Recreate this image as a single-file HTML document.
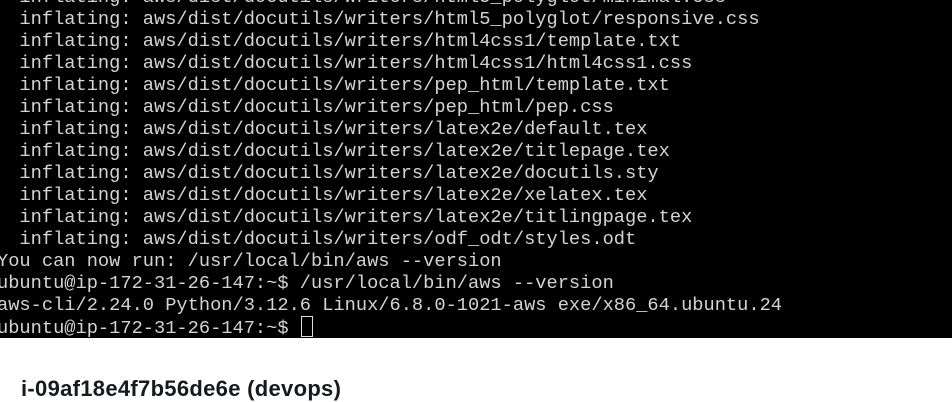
<!DOCTYPE html>
<html><head><style>
html,body{margin:0;padding:0;width:952px;height:402px;overflow:hidden;background:#fff}
.term{position:absolute;left:0;top:0;width:952px;height:338px;background:#000;overflow:hidden}
pre{position:absolute;left:-3px;top:-14px;margin:0;font-family:"Liberation Mono",monospace;font-size:18.7px;line-height:22px;color:#d4d4d4;white-space:pre}
.cur{display:inline-block;width:10px;height:19px;border:1px solid #e0e0e0;vertical-align:-4px;margin-left:1px}
h1{position:absolute;left:21px;top:376px;margin:0;font-family:"Liberation Sans",sans-serif;font-weight:bold;font-size:22px;line-height:26px;color:#16191f;letter-spacing:0.3px}
</style></head><body>
<div class="term"><pre>  inflating: aws/dist/docutils/writers/html5_polyglot/minimal.css
  inflating: aws/dist/docutils/writers/html5_polyglot/responsive.css
  inflating: aws/dist/docutils/writers/html4css1/template.txt
  inflating: aws/dist/docutils/writers/html4css1/html4css1.css
  inflating: aws/dist/docutils/writers/pep_html/template.txt
  inflating: aws/dist/docutils/writers/pep_html/pep.css
  inflating: aws/dist/docutils/writers/latex2e/default.tex
  inflating: aws/dist/docutils/writers/latex2e/titlepage.tex
  inflating: aws/dist/docutils/writers/latex2e/docutils.sty
  inflating: aws/dist/docutils/writers/latex2e/xelatex.tex
  inflating: aws/dist/docutils/writers/latex2e/titlingpage.tex
  inflating: aws/dist/docutils/writers/odf_odt/styles.odt
You can now run: /usr/local/bin/aws --version
ubuntu@ip-172-31-26-147:~$ /usr/local/bin/aws --version
aws-cli/2.24.0 Python/3.12.6 Linux/6.8.0-1021-aws exe/x86_64.ubuntu.24
ubuntu@ip-172-31-26-147:~$ <span class="cur"></span></pre></div>
<h1>i-09af18e4f7b56de6e (devops)</h1>
</body></html>
